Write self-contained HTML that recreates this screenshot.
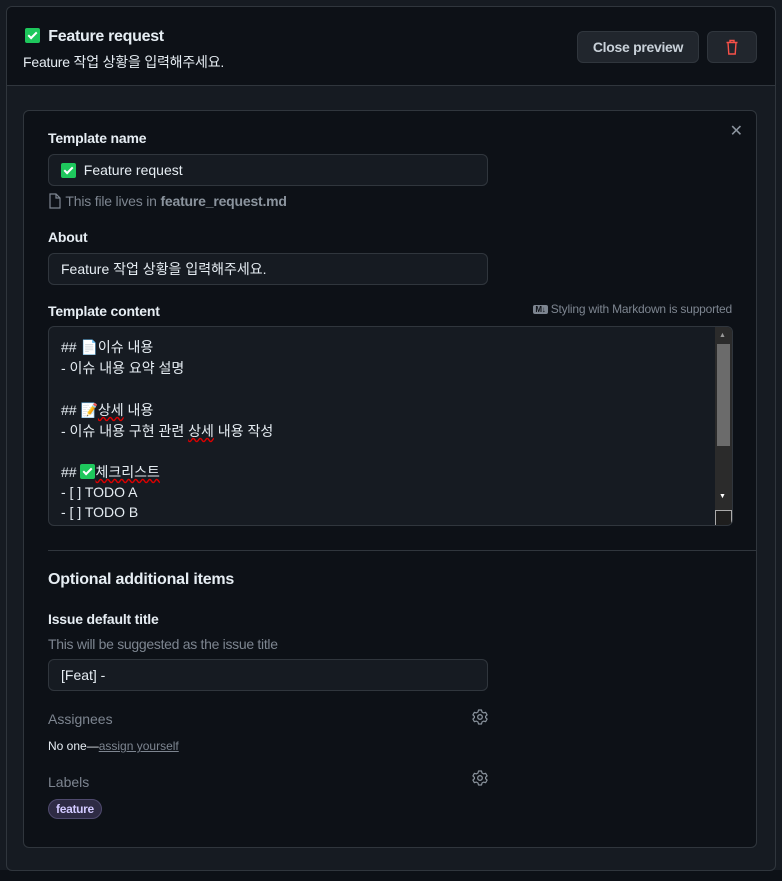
<!DOCTYPE html>
<html><head><meta charset="utf-8"><style>
*{box-sizing:border-box;margin:0;padding:0}
body{width:782px;height:881px;background:#0d1117;font-family:"Liberation Sans","Noto Sans CJK KR",sans-serif;color:#e6edf3;font-size:14px;position:relative;overflow:hidden}
.top{position:absolute;left:0;top:0;width:782px;height:870px;background:#161b22}
.outer{position:absolute;left:6px;top:6px;width:770px;height:865px;border:1px solid #30363d;border-radius:6px;background:#161b22;overflow:hidden}
.hdr{position:absolute;left:0;top:0;width:768px;height:79px;background:#0d1117;border-bottom:1px solid #30363d}
.chk{display:inline-block;width:15px;height:15px;background:#1ec75c;border-radius:2px;position:relative;vertical-align:-2px}
.chk:after{content:"";position:absolute;left:5px;top:2px;width:3px;height:7px;border:solid #fff;border-width:0 2px 2px 0;transform:rotate(45deg)}
.btn{position:absolute;top:24px;height:32px;background:#21262d;border:1px solid #30363d;border-radius:6px;font-weight:bold;font-size:14px;color:#c9d1d9;display:flex;align-items:center;justify-content:center}
.card{position:absolute;left:16px;top:103px;width:734px;height:738px;background:#0d1117;border:1px solid #30363d;border-radius:6px}
.lbl{position:absolute;left:24px;font-weight:bold;font-size:14px;color:#e6edf3;letter-spacing:-0.2px}
.inp{position:absolute;left:24px;width:440px;height:32px;background:#161b22;border:1px solid #30363d;border-radius:6px;padding:0 12px;display:flex;align-items:center;font-size:14px}
.muted{color:#7d8590}
.ta{position:absolute;left:24px;top:215px;width:685px;height:200px;background:#161b22;border:1px solid #30363d;border-radius:6px;overflow:hidden}
.ta .l{position:absolute;left:12px;font-size:14px}
.sb{position:absolute;right:0;top:0;width:17px;height:200px;background:#2b2b2b}
</style></head><body>
<div class="top"></div>
<div class="outer">
 <div class="hdr">
  <div style="position:absolute;left:18px;top:21px;font-weight:bold;font-size:16px;letter-spacing:-0.3px"><span class="chk"></span>&nbsp; Feature request</div>
  <div style="position:absolute;left:16px;top:45px;font-size:14px;letter-spacing:-0.2px">Feature 작업 상황을 입력해주세요.</div>
  <div class="btn" style="left:570px;width:122px;letter-spacing:-0.3px">Close preview</div>
  <div class="btn" style="left:700px;width:50px"><svg width="16" height="18" viewBox="0 0 16 18"><path d="M2.5 4.5h11M6 4.5V2.5h4v2M4 4.5l.8 11.5h6.4L12 4.5" stroke="#f85149" stroke-width="1.4" fill="none"/></svg></div>
 </div>
 <div class="card">
  <div style="position:absolute;right:13px;top:10px;color:#8b949e;font-size:16px">✕</div>
  <div class="lbl" style="top:19px">Template name</div>
  <div class="inp" style="top:43px"><span class="chk"></span>&nbsp;&nbsp;Feature request</div>
  <div style="position:absolute;left:24px;top:82px;font-size:14px;letter-spacing:-0.2px" class="muted"><svg width="14" height="16" viewBox="0 0 14 16" style="vertical-align:-3px"><path d="M2 1h6l4 4v10H2z M8 1v4h4" stroke="#7d8590" fill="none" stroke-width="1.2"/></svg> This file lives in <b style="color:#8b949e">feature_request.md</b></div>
  <div class="lbl" style="top:118px">About</div>
  <div class="inp" style="top:142px">Feature 작업 상황을 입력해주세요.</div>
  <div class="lbl" style="top:192px">Template content</div>
  <div style="position:absolute;right:24px;top:191px;font-size:12px;letter-spacing:-0.2px" class="muted"><span style="display:inline-block;background:#7d8590;color:#0d1117;font-size:8px;font-weight:bold;padding:0 2px;border-radius:2px;vertical-align:1px">M↓</span> Styling with Markdown is supported</div>
  <div class="ta">
   <div class="l" style="top:10px">## 📄이슈 내용</div>
   <div class="l" style="top:31px">- 이슈 내용 요약 설명</div>
   <div class="l" style="top:73px">## 📝<u style="text-decoration:underline wavy #d00">상세</u> 내용</div>
   <div class="l" style="top:94px">- 이슈 내용 구현 관련 <u style="text-decoration:underline wavy #d00">상세</u> 내용 작성</div>
   <div class="l" style="top:135px">## <span class="chk"></span><u style="text-decoration:underline wavy #d00">체크리스트</u></div>
   <div class="l" style="top:157px">- [ ] TODO A</div>
   <div class="l" style="top:177px">- [ ] TODO B</div>
   <div class="sb"><div style="position:absolute;left:4px;top:5px;color:#999;font-size:7px">▲</div><div style="position:absolute;left:2px;top:17px;width:13px;height:102px;background:#6b6b6b"></div><div style="position:absolute;left:4px;top:166px;color:#fff;font-size:7px">▼</div><div style="position:absolute;left:0;bottom:0;width:17px;height:17px;background:#1e1e1e;border:1px solid #aaa"></div></div>
  </div>
  <div style="position:absolute;left:24px;top:439px;width:709px;height:1px;background:#30363d"></div>
  <div class="lbl" style="top:460px;font-size:16px">Optional additional items</div>
  <div class="lbl" style="top:500px">Issue default title</div>
  <div style="position:absolute;left:24px;top:525px;font-size:14px;letter-spacing:-0.3px" class="muted">This will be suggested as the issue title</div>
  <div class="inp" style="top:548px">[Feat] -</div>
  <div style="position:absolute;left:24px;top:600px;font-size:14px" class="muted">Assignees</div>
  <div style="position:absolute;left:24px;top:628px;font-size:12px">No one—<span class="muted" style="text-decoration:underline">assign yourself</span></div>
  <div style="position:absolute;left:24px;top:663px;font-size:14px" class="muted">Labels</div>
  <svg style="position:absolute;left:447px;top:597px" width="18" height="18" viewBox="0 0 18 18"><circle cx="9" cy="9" r="2.3" stroke="#8b949e" fill="none" stroke-width="1.3"/><path d="M7.5 2h3l.5 2 1.6.9 2-.6 1.5 2.6-1.5 1.4v1.4l1.5 1.4-1.5 2.6-2-.6-1.6.9-.5 2h-3l-.5-2-1.6-.9-2 .6-1.5-2.6 1.5-1.4V8.3L1.9 6.9l1.5-2.6 2 .6L7 4z" stroke="#8b949e" fill="none" stroke-width="1.2" stroke-linejoin="round"/></svg>
  <svg style="position:absolute;left:447px;top:658px" width="18" height="18" viewBox="0 0 18 18"><circle cx="9" cy="9" r="2.3" stroke="#8b949e" fill="none" stroke-width="1.3"/><path d="M7.5 2h3l.5 2 1.6.9 2-.6 1.5 2.6-1.5 1.4v1.4l1.5 1.4-1.5 2.6-2-.6-1.6.9-.5 2h-3l-.5-2-1.6-.9-2 .6-1.5-2.6 1.5-1.4V8.3L1.9 6.9l1.5-2.6 2 .6L7 4z" stroke="#8b949e" fill="none" stroke-width="1.2" stroke-linejoin="round"/></svg>
  <div style="position:absolute;left:24px;top:688px;height:20px;padding:0 7px;border-radius:10px;background:#2e2b44;border:1px solid #4f4a6e;color:#d2c9ff;font-weight:bold;font-size:12px;line-height:18px;letter-spacing:-0.3px">feature</div>
 </div>
</div>
</body></html>
